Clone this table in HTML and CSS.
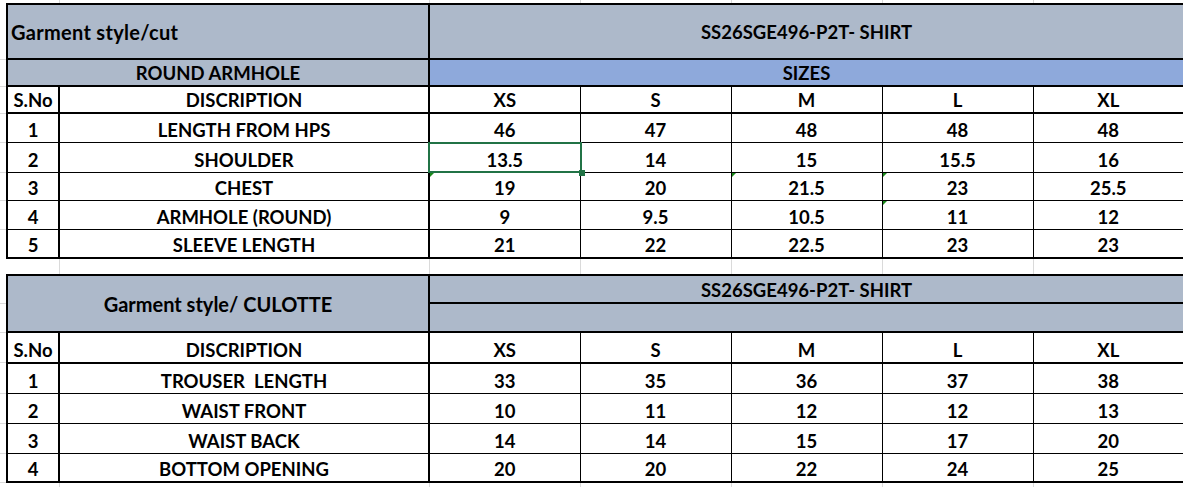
FILE: index.html
```html
<!DOCTYPE html>
<html lang="en">
<head>
<meta charset="utf-8">
<title>Garment measurement sheet</title>
<link rel="stylesheet" href="styles.css">
</head>
<body>
<div class="sheet">
  <table class="spec t1">
    <colgroup>
      <col class="c-no"><col class="c-desc"><col class="c-size"><col class="c-size"><col class="c-size"><col class="c-size"><col class="c-xl">
    </colgroup>
    <tr class="r-title">
      <td colspan="2" class="gray title big left">Garment style/cut</td>
      <td colspan="5" class="gray title">SS26SGE496-P2T- SHIRT</td>
    </tr>
    <tr class="r-sub">
      <td colspan="2" class="gray no-desc">ROUND ARMHOLE</td>
      <td colspan="5" class="blue">SIZES</td>
    </tr>
    <tr class="r-head">
      <td class="no">S.No</td><td class="desc">DISCRIPTION</td><td>XS</td><td>S</td><td>M</td><td>L</td><td>XL</td>
    </tr>
    <tr class="r-d1">
      <td class="no">1</td><td class="desc">LENGTH FROM HPS</td><td>46</td><td>47</td><td>48</td><td>48</td><td>48</td>
    </tr>
    <tr class="r-d2">
      <td class="no">2</td><td class="desc">SHOULDER</td><td class="sel">13.5</td><td>14</td><td>15</td><td>15.5</td><td>16</td>
    </tr>
    <tr class="r-d3">
      <td class="no">3</td><td class="desc">CHEST</td><td class="tri">19</td><td>20</td><td class="tri">21.5</td><td class="tri">23</td><td>25.5</td>
    </tr>
    <tr class="r-d4">
      <td class="no">4</td><td class="desc">ARMHOLE (ROUND)</td><td>9</td><td>9.5</td><td>10.5</td><td class="tri">11</td><td>12</td>
    </tr>
    <tr class="r-d5">
      <td class="no">5</td><td class="desc">SLEEVE LENGTH</td><td>21</td><td>22</td><td>22.5</td><td>23</td><td>23</td>
    </tr>
  </table>

  <table class="spec t2">
    <colgroup>
      <col class="c-no"><col class="c-desc"><col class="c-size"><col class="c-size"><col class="c-size"><col class="c-size"><col class="c-xl">
    </colgroup>
    <tr class="r-a">
      <td colspan="2" rowspan="2" class="gray title big2">Garment style/ CULOTTE</td>
      <td colspan="5" class="gray split">SS26SGE496-P2T- SHIRT</td>
    </tr>
    <tr class="r-b">
      <td colspan="5" class="gray"></td>
    </tr>
    <tr class="r-head2">
      <td class="no">S.No</td><td class="desc">DISCRIPTION</td><td>XS</td><td>S</td><td>M</td><td>L</td><td>XL</td>
    </tr>
    <tr class="r-e1">
      <td class="no">1</td><td class="desc">TROUSER&nbsp; LENGTH</td><td>33</td><td>35</td><td>36</td><td>37</td><td>38</td>
    </tr>
    <tr class="r-e2">
      <td class="no">2</td><td class="desc">WAIST FRONT</td><td>10</td><td>11</td><td>12</td><td>12</td><td>13</td>
    </tr>
    <tr class="r-e3">
      <td class="no">3</td><td class="desc">WAIST BACK</td><td>14</td><td>14</td><td>15</td><td>17</td><td>20</td>
    </tr>
    <tr class="r-e4">
      <td class="no">4</td><td class="desc">BOTTOM OPENING</td><td>20</td><td>20</td><td>22</td><td>24</td><td>25</td>
    </tr>
  </table>
</div>
</body>
</html>
```

FILE: styles.css
```css
html, body {
  margin: 0;
  padding: 0;
  background: #ffffff;
}

.sheet {
  width: 1183px;
  height: 487px;
  overflow: hidden;
  box-sizing: border-box;
  padding: 3px 0 0 6px;
  background-color: #ffffff;
  background-image:
    linear-gradient(#dadada, #dadada),
    linear-gradient(#dadada, #dadada),
    linear-gradient(#dadada, #dadada),
    linear-gradient(#dadada, #dadada),
    linear-gradient(#dadada, #dadada),
    linear-gradient(#dadada, #dadada);
  background-repeat: no-repeat;
  background-size: 1px 100%;
  background-position: 59px 0, 429px 0, 580px 0, 731px 0, 882px 0, 1033px 0;
  position: relative;
}

.sheet::before {
  content: "";
  position: absolute;
  left: 0;
  top: 0;
  width: 6px;
  height: 100%;
  background-image:
    linear-gradient(#dadada, #dadada), linear-gradient(#dadada, #dadada),
    linear-gradient(#dadada, #dadada), linear-gradient(#dadada, #dadada),
    linear-gradient(#dadada, #dadada), linear-gradient(#dadada, #dadada),
    linear-gradient(#dadada, #dadada), linear-gradient(#dadada, #dadada),
    linear-gradient(#dadada, #dadada), linear-gradient(#dadada, #dadada),
    linear-gradient(#dadada, #dadada), linear-gradient(#dadada, #dadada),
    linear-gradient(#dadada, #dadada), linear-gradient(#dadada, #dadada);
  background-repeat: no-repeat;
  background-size: 6px 1px;
  background-position:
    0 59px, 0 86px, 0 113px, 0 142px, 0 172px, 0 200px, 0 229px,
    0 303px, 0 332px, 0 362px, 0 393px, 0 423px, 0 453px, 0 482px;
}

.spec {
  border-collapse: collapse;
  table-layout: fixed;
  width: 1177px;
  border: 2px solid #000;
}

.t2 {
  margin-top: 15px;
}

.c-no { width: 52px; }
.c-desc { width: 370px; }
.c-size { width: 151px; }
.c-xl { width: 151px; }

.spec td {
  border: 1px solid #000;
  background: #ffffff;
  color: #000;
  font-family: Lato, "Liberation Sans", sans-serif;
  font-weight: 700;
  font-size: 18.5px;
  line-height: 20px;
  text-align: center;
  vertical-align: bottom;
  padding: 0 2px 2px;
  white-space: nowrap;
  overflow: visible;
}

.spec td.no,
.spec td.desc,
.spec td.no-desc,
.spec td.title.left,
.t2 td[rowspan] {
  border-right: 2px solid #000;
}

.spec td.gray { background: #adb9ca; }
.spec td.blue { background: #8ea9db; }

.spec td.title { vertical-align: middle; padding-bottom: 0; }
.spec td.left { text-align: left; }
.spec td.big { font-size: 20px; letter-spacing: 0.3px; padding-left: 3px; }
.spec td.big2 { font-size: 20px; }

.r-title td, .r-sub td, .r-head td, .r-head2 td, .r-a td, .r-b td {
  border-top: 2px solid #000;
  border-bottom: 2px solid #000;
}
.t2 td.split { border-bottom: 2px solid #000; }

.r-title { height: 55px; }
.r-sub { height: 27px; }
.r-head { height: 27px; }
.r-d1 { height: 29px; }
.r-d2 { height: 30px; }
.r-d3 { height: 28px; }
.r-d4 { height: 29px; }
.r-d5 { height: 29px; }

.r-a { height: 28px; }
.r-b { height: 29px; }
.r-head2 { height: 31px; }
.r-e1 { height: 30px; }
.r-e2 { height: 30px; }
.r-e3 { height: 30px; }
.r-e4 { height: 29px; }

/* Excel selection box and fill handle */
.spec td.sel { position: relative; }
.spec td.sel::after {
  content: "";
  position: absolute;
  left: -2px;
  top: -1px;
  right: -2px;
  bottom: -1px;
  border: 2px solid #217346;
  pointer-events: none;
}
.spec td.sel::before {
  content: "";
  position: absolute;
  right: -5px;
  bottom: -4px;
  width: 6px;
  height: 6px;
  background: #217346;
  z-index: 2;
}

/* "number stored as text" error indicators */
.spec td.tri { position: relative; }
.spec td.tri::before {
  content: "";
  position: absolute;
  left: 0;
  top: 0;
  width: 0;
  height: 0;
  border-style: solid;
  border-width: 4px 4px 0 0;
  border-color: #1a8a1a transparent transparent transparent;
}
```
